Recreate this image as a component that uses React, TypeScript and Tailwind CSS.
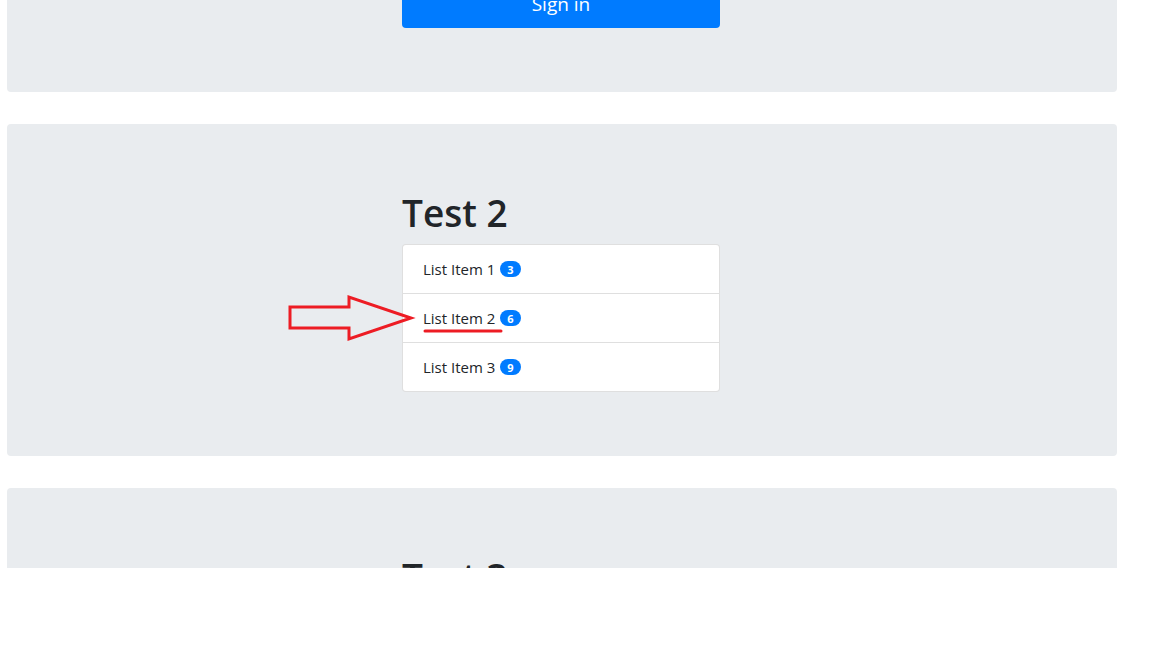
const items = [
  { label: "List Item 1", count: 3 },
  { label: "List Item 2", count: 6 },
  { label: "List Item 3", count: 9 },
]

function Panel({ title }: { title: string }) {
  return (
    <div className="w-[1110px] rounded bg-[#e9ecef] px-8 py-16">
      <div className="ml-[363px] w-[318px]">
        <h1 className="mb-[6px] text-[37px] leading-[50px] font-semibold text-[#212529]">{title}</h1>
        <ul className="rounded border border-black/[.125] bg-white">
          {items.map((it, i) => (
            <li
              key={it.label}
              className={`flex items-center px-5 text-[15px] text-[#212529] ${i > 0 ? "h-[49px] border-t border-black/[.125]" : "h-12"}`}
            >
              {it.label}
              <span className="ml-[5px] flex h-4 items-center rounded-full bg-[#007bff] px-[7px] text-[11px] leading-none font-bold text-white">
                {it.count}
              </span>
            </li>
          ))}
        </ul>
      </div>
    </div>
  )
}

export default function App() {
  return (
    <div className="relative h-[568px] overflow-hidden bg-white font-['Open_Sans',sans-serif]">
      <div className="mt-[-84px] flex flex-col gap-8 pl-[7px]">
        <div className="w-[1110px] rounded bg-[#e9ecef] px-8 py-16">
          <div className="ml-[363px] w-[318px]">
            <button className="h-12 w-full rounded bg-[#007bff] text-[19px] text-white">Sign in</button>
          </div>
        </div>
        <Panel title="Test 2" />
        <Panel title="Test 3" />
      </div>

      <svg className="pointer-events-none absolute top-0 left-0" width="1152" height="568">
        <polygon
          points="290,307 349,307 349,297 411,318 349,339 349,328 290,328"
          fill="none"
          stroke="#ed1c24"
          strokeWidth="3"
        />
        <line x1="425" y1="331" x2="501" y2="331" stroke="#ed1c24" strokeWidth="3" strokeLinecap="round" />
      </svg>
    </div>
  )
}
